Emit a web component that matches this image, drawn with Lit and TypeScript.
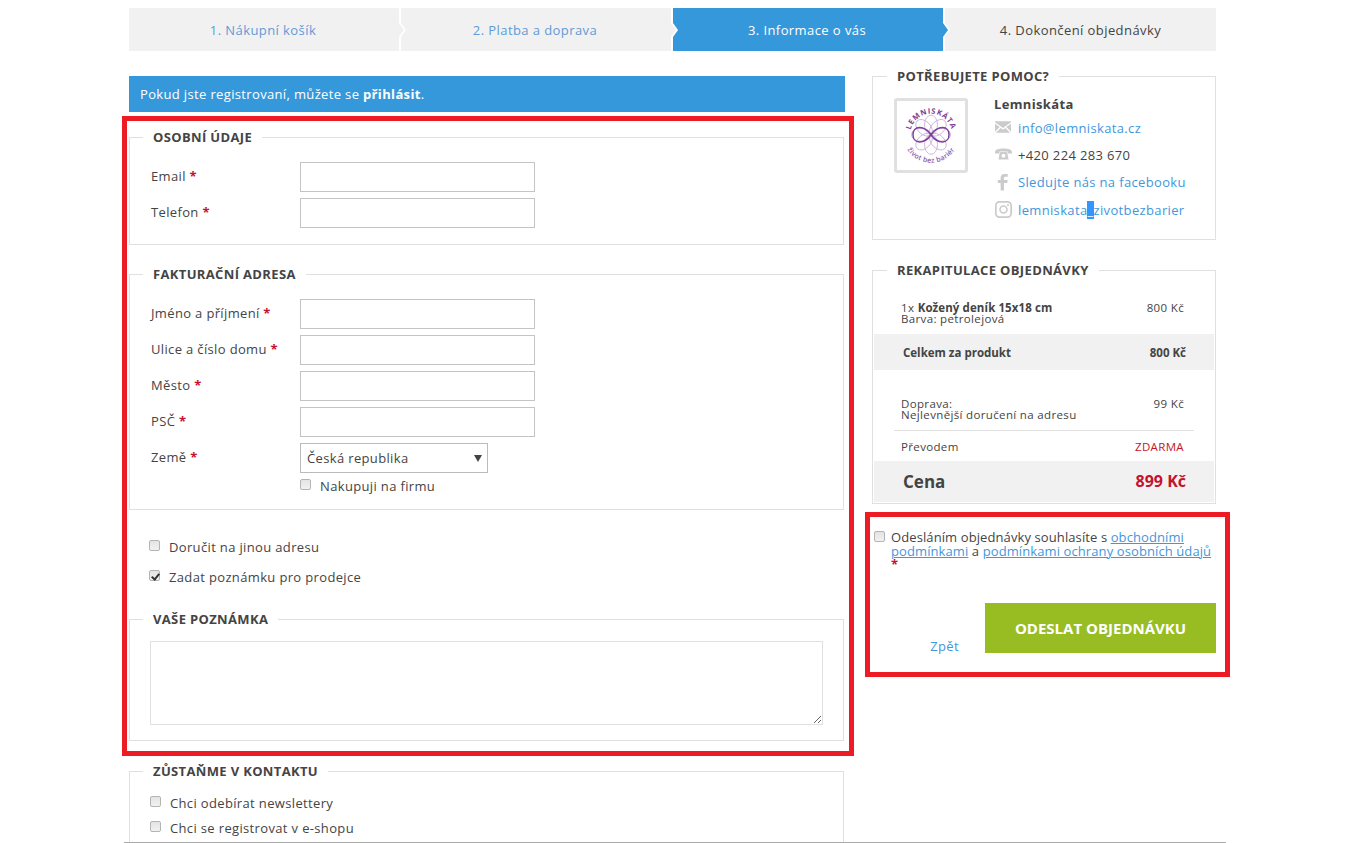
import { LitElement, html, css, svg } from "lit";
import { customElement } from "lit/decorators.js";

@customElement("app-root")
export class AppRoot extends LitElement {
  static styles = css`
    :host { display: block; height: 843px; overflow: hidden; position: relative; background: #fff; }
    * { box-sizing: border-box; }
    .page { width: 1087px; margin-left: 129px; padding-top: 8px; font: 13px/18px "Open Sans", sans-serif; color: #444; letter-spacing: 0.35px; }
    a { color: #3f97dc; text-decoration: none; }
    .steps { display: grid; grid-template-columns: 270px 270px 270px 271px; gap: 2px; height: 43px; margin-bottom: 25px; letter-spacing: 0.42px; }
    .step { position: relative; background: #f1f1f1; display: flex; align-items: center; justify-content: center; color: #6a9bd8; padding-right: 2px; }
    .step.done { color: #5f9bd8; }
    .step.active { background: #3598db; color: #fff; }
    .step.last { color: #444; padding-right: 0; }
    .step:nth-child(1) { z-index: 4; } .step:nth-child(2) { z-index: 3; } .step:nth-child(3) { z-index: 2; } .step:nth-child(4) { z-index: 1; }
    .step:not(.last)::before, .step:not(.last)::after { content: ""; position: absolute; top: 15px; border-style: solid; border-width: 7px 0 7px 5px; border-color: transparent transparent transparent #fff; }
    .step:not(.last)::before { left: calc(100% + 2px); }
    .step:not(.last)::after { left: 100%; border-left-color: #f1f1f1; }
    .step.active::after { border-left-color: #3598db !important; }
    .cols { display: flex; gap: 27px; align-items: flex-start; }
    .left { width: 716px; }
    .left fieldset { width: 715px; }
    .right { width: 344px; }
    .notice { height: 36px; background: #3598db; color: #fff; padding-left: 11px; display: flex; align-items: center; white-space: pre; margin-bottom: 16px; }
    fieldset { margin: 0; border: 1px solid #e0e0e0; min-width: 0; }
    legend { margin-left: 13px; padding: 0 10px; font-size: 13px; font-weight: 700; text-transform: uppercase; letter-spacing: 0.35px; line-height: 18px; color: #444; }
    .personal legend, .address legend { margin-left: -8px; }
    .note legend, .contact legend, .help legend { margin-left: -7px; }
    .personal { padding: 16px 21px 16px; margin-bottom: 20px; }
    .address { padding: 16px 21px 14px; }
    .row { display: flex; height: 30px; margin-bottom: 6px; }
    .row label { width: 149px; padding-top: 5px; }
    .row:last-of-type { margin-bottom: 0; }
    .req { color: #c4122f; font-weight: 700; }
    input.text { width: 235px; height: 30px; border: 1px solid #c4c4c4; background: #fff; }
    .select { position: relative; width: 188px; height: 30px; border: 1px solid #bbb; padding: 5px 6px; }
    .select::after { content: ""; position: absolute; right: 5px; top: 11px; border-style: solid; border-width: 7px 4.5px 0; border-color: #444 transparent transparent; }
    .check { display: flex; align-items: flex-start; gap: 9px; }
    input[type="checkbox"] { appearance: none; flex: none; width: 11px; height: 11px; margin: 2px 0 0; border: 1px solid #b4b4b4; border-radius: 2px; background: linear-gradient(#e4e4e4, #f1f1f1); position: relative; }
    input[type="checkbox"]:checked::after { content: ""; position: absolute; left: 2.5px; top: 0.5px; width: 3px; height: 6px; border: solid #333; border-width: 0 2px 2px 0; transform: rotate(40deg); }
    .firm { margin: 4px 0 0 149px; }
    .extras { padding: 28px 0 0 20px; display: flex; flex-direction: column; gap: 12px; margin-bottom: 24px; }
    .note { padding: 13px 20px 15px 20px; margin-bottom: 21px; }
    textarea { display: block; width: 673px; height: 84px; border: 1px solid #e0e0e0; margin: 0; padding: 0; }
    .contact { padding: 14px 20px 0; height: 90px; border-bottom: 0; }
    .contact .check { margin-bottom: 7px; }
    .help { display: flex; padding: 13px 21px 17px; margin: -9px 0 21px; height: 173px; }
    .logo { flex: none; width: 74px; height: 75px; border: 3px solid #e0e0e0; border-radius: 3px; margin-right: 26px; }
    .logo svg { display: block; }
    .name { font-weight: 700; margin: -3px 0 1px; }
    .contactline { display: flex; align-items: center; height: 27px; white-space: pre; }
    .contactline:last-child { margin-top: 1px; }
    .contactline .ic { width: 24px; padding-left: 1px; flex: none; display: flex; }
    .contactline svg { display: block; fill: #cbcbcb; }
    .contactline .up { margin-top: -2px; }
    mark { background: #3297fd; color: #fff; }
    .recap { padding: 23px 1px 0; height: 243px; font-size: 11.5px; line-height: 11px; }
    .recap .line { display: flex; justify-content: space-between; padding: 0 30px 0 27px; }
    .recap .line b { letter-spacing: 0.1px; }
    .recap .gray { background: #f1f1f1; display: flex; justify-content: space-between; align-items: center; font-weight: 700; padding: 0 28px 0 29px; letter-spacing: 0; }
    .sub { height: 36px; margin-top: 10px; }
    .ship { margin-top: 28px; height: 32px; }
    .rule { height: 1px; background: #e0e0e0; margin: 0 20px 0 20px; }
    .pay { height: 30px; align-items: center; }
    .red { color: #c4122f; }
    .recap .total { height: 41px; font-size: 17px; }
    .total .red { font-size: 16px; }
    .consent { margin-top: 26px; padding-left: 2px; font-size: 13px; line-height: 13.5px; letter-spacing: 0.1px; display: flex; gap: 6px; height: 73px; }
    .consent a { text-decoration: underline; }
    .consent input { margin-top: 1px; }
    .consent-text { display: block; padding-top: 1px; }
    .actions { display: flex; align-items: flex-end; justify-content: flex-end; gap: 26px; }
    .actions a { line-height: 14px; }
    .submit { width: 231px; height: 50px; border: 0; background: #97bd22; color: #fff; font: 700 15px "Open Sans", sans-serif; text-transform: uppercase; }
    .mark1, .mark2 { position: absolute; border: 5px solid #ed1c24; pointer-events: none; }
    .mark1 { left: 122px; top: 116px; width: 732px; height: 640px; }
    .mark2 { left: 865px; top: 512px; width: 365px; height: 165px; }
    .bottomline { position: absolute; left: 124px; top: 842px; width: 1102px; height: 1px; background: #aaa; }
  `;

  private field(label: string) {
    return html`<div class="row"><label>${label} <span class="req">*</span></label><input class="text" type="text" /></div>`;
  }

  private logo() {
    const petals = [0, 45, 90, 135, 180, 225, 270, 315];
    return html`<svg width="68" height="69" viewBox="0 0 68 69">
      <defs>
        <path id="arcTop" d="M 13 33.7 A 21 21 0 0 1 55 33.7"></path>
        <path id="arcBottom" d="M 6 33.7 A 28 28 0 0 0 62 33.7"></path>
      </defs>
      ${petals.map((a) => svg`<ellipse cx="34" cy="23.9" rx="6.5" ry="9.8" fill="none" stroke="#cdb0dc" stroke-width="0.9" transform="rotate(${a} 34 33.7)"></ellipse>`)}
      <path d="M34 33.7 C 31 29.5 27 26.5 22.5 26.5 C 18.5 26.5 16 29.5 16 33.7 C 16 37.9 18.5 40.9 22.5 40.9 C 27 40.9 31 37.9 34 33.7 C 37 29.5 41 26.5 45.5 26.5 C 49.5 26.5 52 29.5 52 33.7 C 52 37.9 49.5 40.9 45.5 40.9 C 41 40.9 37 37.9 34 33.7 Z" fill="none" stroke="#7d3f98" stroke-width="1.5"></path>
      <text font-family="Open Sans, sans-serif" font-size="7.5" font-weight="700" fill="#7d3f98" letter-spacing="0.8"><textPath href="#arcTop" startOffset="50%" text-anchor="middle">LEMNISKÁTA</textPath></text>
      <text font-family="Open Sans, sans-serif" font-size="7" font-weight="600" fill="#8f5aa8" letter-spacing="0.3"><textPath href="#arcBottom" startOffset="50%" text-anchor="middle">život bez bariér</textPath></text>
    </svg>`;
  }

  render() {
    return html`
      <div class="page">
        <div class="steps">
          <div class="step done">1. Nákupní košík</div>
          <div class="step done">2. Platba a doprava</div>
          <div class="step active">3. Informace o vás</div>
          <div class="step last">4. Dokončení objednávky</div>
        </div>
        <div class="cols">
          <div class="left">
            <div class="notice">Pokud jste registrovaní, můžete se <b>přihlásit</b>.</div>
            <fieldset class="personal">
              <legend>Osobní údaje</legend>
              ${this.field("Email")}
              ${this.field("Telefon")}
            </fieldset>
            <fieldset class="address">
              <legend>Fakturační adresa</legend>
              ${this.field("Jméno a příjmení")}
              ${this.field("Ulice a číslo domu")}
              ${this.field("Město")}
              ${this.field("PSČ")}
              <div class="row"><label>Země <span class="req">*</span></label><div class="select">Česká republika</div></div>
              <label class="check firm"><input type="checkbox" /><span>Nakupuji na firmu</span></label>
            </fieldset>
            <div class="extras">
              <label class="check"><input type="checkbox" /><span>Doručit na jinou adresu</span></label>
              <label class="check"><input type="checkbox" checked /><span>Zadat poznámku pro prodejce</span></label>
            </div>
            <fieldset class="note">
              <legend>Vaše poznámka</legend>
              <textarea></textarea>
            </fieldset>
            <fieldset class="contact">
              <legend>Zůstaňme v kontaktu</legend>
              <label class="check"><input type="checkbox" /><span>Chci odebírat newslettery</span></label>
              <label class="check"><input type="checkbox" /><span>Chci se registrovat v e-shopu</span></label>
            </fieldset>
          </div>
          <div class="right">
            <fieldset class="help">
              <legend>Potřebujete pomoc?</legend>
              <div class="logo">${this.logo()}</div>
              <div>
                <div class="name">Lemniskáta</div>
                <div class="contactline"><span class="ic"><svg class="up" width="16" height="12" viewBox="0 0 17 12"><path d="M0 1 L8.5 7 L17 1 V0 H0 Z M0 2.6 V11 L5 6 Z M17 2.6 V11 L12 6 Z M1 12 H16 L11 7 L8.5 8.8 L6 7 Z"></path></svg></span><a>info@lemniskata.cz</a></div>
                <div class="contactline"><span class="ic"><svg class="up" width="17" height="12" viewBox="0 0 17 11"><path d="M0 3.5 C0 1 4 0 8.5 0 C13 0 17 1 17 3.5 V5 H12.5 V3 H4.5 V5 H0 Z M4.5 5.5 L5.5 3.5 H11.5 L12.5 5.5 L13.5 11 H3.5 Z" fill-rule="evenodd"></path><circle cx="8.5" cy="7.2" r="2" fill="#fff"></circle></svg></span><span>+420 224 283 670</span></div>
                <div class="contactline"><span class="ic"><svg width="16" height="18" viewBox="0 0 17 18"><path d="M6 18 V10 H3 V7 H6 V4.5 C6 1.8 7.6 0.5 10 0.5 H13.5 V3.5 H11 C10 3.5 9.5 4 9.5 5 V7 H13.5 L13 10 H9.5 V18 Z"></path></svg></span><a>Sledujte nás na facebooku</a></div>
                <div class="contactline"><span class="ic"><svg width="17" height="17" viewBox="0 0 17 17"><path fill-rule="evenodd" d="M4.5 0 H12.5 A4.5 4.5 0 0 1 17 4.5 V12.5 A4.5 4.5 0 0 1 12.5 17 H4.5 A4.5 4.5 0 0 1 0 12.5 V4.5 A4.5 4.5 0 0 1 4.5 0 Z M4.5 1.7 A2.8 2.8 0 0 0 1.7 4.5 V12.5 A2.8 2.8 0 0 0 4.5 15.3 H12.5 A2.8 2.8 0 0 0 15.3 12.5 V4.5 A2.8 2.8 0 0 0 12.5 1.7 Z M8.5 4.2 A4.3 4.3 0 1 1 8.5 12.8 A4.3 4.3 0 1 1 8.5 4.2 Z M8.5 5.8 A2.7 2.7 0 1 0 8.5 11.2 A2.7 2.7 0 1 0 8.5 5.8 Z"></path><circle cx="13" cy="4" r="1"></circle></svg></span><a>lemniskata<mark>_</mark>zivotbezbarier</a></div>
              </div>
            </fieldset>
            <fieldset class="recap">
              <legend>Rekapitulace objednávky</legend>
              <div class="line"><span>1x <b>Kožený deník 15x18 cm</b><br />Barva: petrolejová</span><span>800 Kč</span></div>
              <div class="gray sub"><span>Celkem za produkt</span><span>800 Kč</span></div>
              <div class="line ship"><span>Doprava:<br />Nejlevnější doručení na adresu</span><span>99 Kč</span></div>
              <div class="rule"></div>
              <div class="line pay"><span>Převodem</span><span class="red">ZDARMA</span></div>
              <div class="gray total"><span>Cena</span><span class="red">899 Kč</span></div>
            </fieldset>
            <div class="consent">
              <input type="checkbox" />
              <span class="consent-text">Odesláním objednávky souhlasíte s <a>obchodními podmínkami</a> a <a>podmínkami ochrany osobních údajů</a> <span class="req">*</span></span>
            </div>
            <div class="actions"><a>Zpět</a><button class="submit">Odeslat objednávku</button></div>
          </div>
        </div>
      </div>
      <div class="mark1"></div>
      <div class="mark2"></div>
      <div class="bottomline"></div>
    `;
  }
}
